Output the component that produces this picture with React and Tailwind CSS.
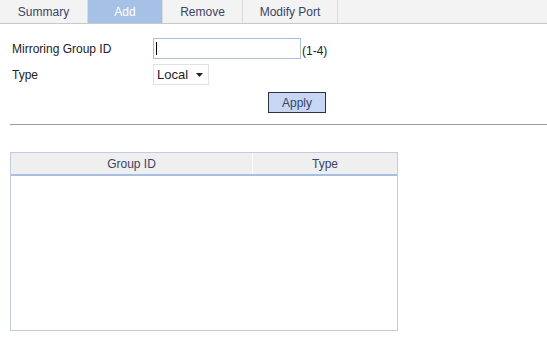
export default function App() {
  const tabs = [
    { label: "Summary", w: "w-[88px]" },
    { label: "Add", w: "w-[75px]", active: true },
    { label: "Remove", w: "w-[80px]" },
    { label: "Modify Port", w: "w-[95px]" },
  ];

  return (
    <div className="w-[547px] h-[345px] bg-white text-[12px] text-[#222] font-['Liberation_Sans',Arial,sans-serif]">
      <div className="flex h-[24px] bg-[#f3f3f3] border-b border-[#c8c8c8]">
        {tabs.map((t) => (
          <div
            key={t.label}
            className={`${t.w} flex items-center justify-center border-r border-[#dcdcdc] ${
              t.active ? "bg-[#a7c1e6] text-white" : "text-[#3a4466]"
            }`}
          >
            {t.label}
          </div>
        ))}
      </div>

      <div className="pl-[12px] pt-[14px]">
        <div className="flex items-center h-[21px]">
          <div className="w-[141px]">Mirroring Group ID</div>
          <div className="w-[148px] h-[21px] border border-[#a9bed8] bg-white flex items-center pl-[2px]">
            <div className="w-px h-[13px] bg-black" />
          </div>
          <div className="self-end mb-[-1px] ml-[1px]">(1-4)</div>
        </div>
        <div className="flex items-center h-[21px] mt-[5px]">
          <div className="w-[141px]">Type</div>
          <div className="w-[56px] h-[21px] border border-[#e2e2e2] flex items-center justify-between pl-[3px] pr-[5px] text-[13px]">
            <span>Local</span>
            <svg width="7" height="4" viewBox="0 0 7 4">
              <path d="M0 0h7L3.5 4z" fill="#222" />
            </svg>
          </div>
        </div>
        <div className="flex mt-[7px] pl-[256px]">
          <button className="w-[58px] h-[21px] bg-[#c6d6f3] border border-[#2f2f3f] text-[#3a4466] text-[12px]">
            Apply
          </button>
        </div>
      </div>

      <div className="ml-[10px] mt-[11px] border-t border-[#9a9a9a]" />

      <div className="ml-[10px] mt-[27px] w-[388px] h-[179px] border border-[#c3cbe0] flex flex-col">
        <div className="flex h-[23px] bg-[#efefef] border-b-2 border-[#a7bfe3] text-[#3a4466]">
          <div className="w-[242px] flex items-center justify-center border-r border-white">Group ID</div>
          <div className="flex-1 flex items-center justify-center">Type</div>
        </div>
      </div>
    </div>
  );
}
